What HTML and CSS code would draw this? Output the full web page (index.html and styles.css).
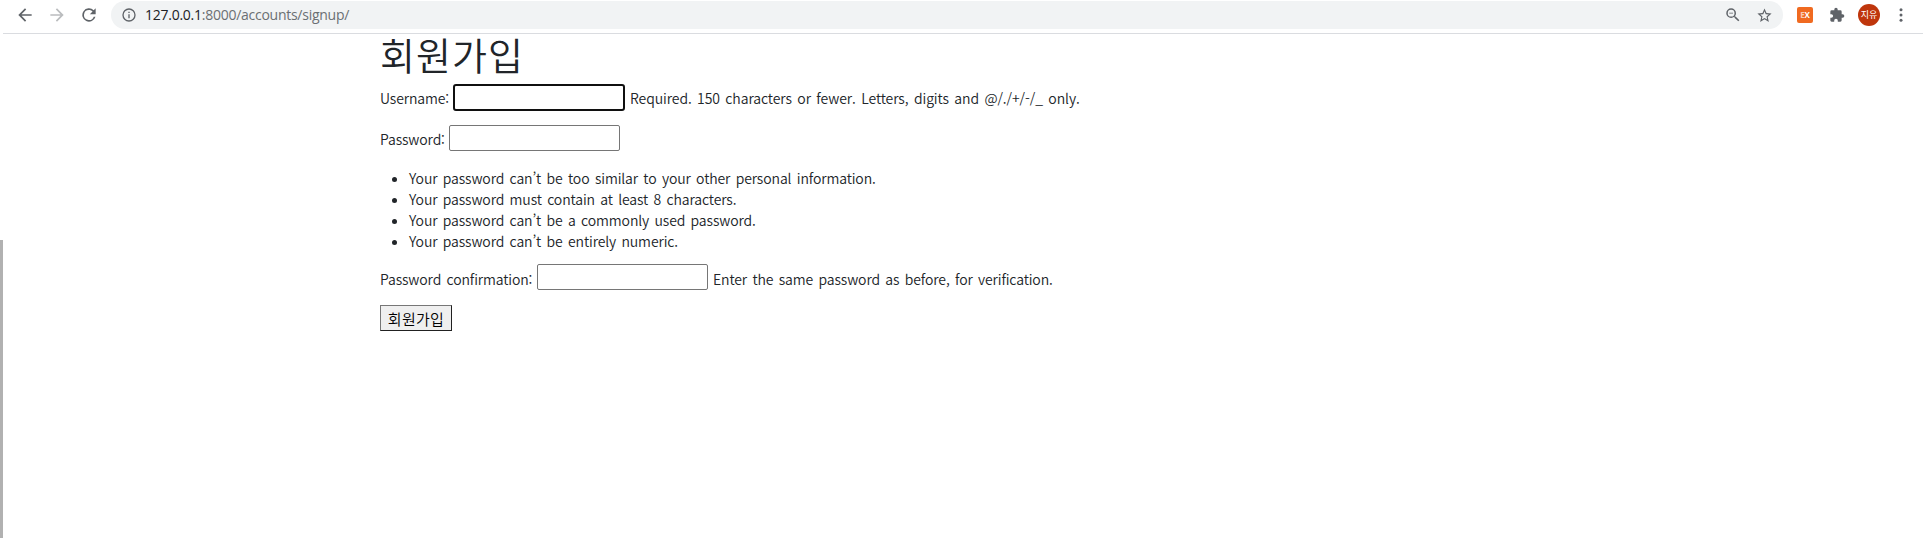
FILE: index.html
```html
<!DOCTYPE html>
<html lang="ko">
<head>
<meta charset="utf-8">
<title>회원가입</title>
<link rel="stylesheet" href="styles.css">
</head>
<body>
<header class="toolbar">
  <svg class="icon back" viewBox="0 0 24 24"><path d="M20 11H7.83l5.59-5.59L12 4l-8 8 8 8 1.41-1.41L7.83 13H20z"/></svg>
  <svg class="icon forward" viewBox="0 0 24 24"><path d="M12 4l-1.41 1.41L16.17 11H4v2h12.17l-5.58 5.59L12 20l8-8z"/></svg>
  <svg class="icon reload" viewBox="0 0 24 24"><path d="M17.65 6.35A8 8 0 1 0 19.73 14h-2.08A6 6 0 1 1 12 6c1.66 0 3.14.69 4.22 1.78L13 11h7V4z"/></svg>
  <div class="address">
    <svg class="info" viewBox="0 0 24 24"><path d="M11 7h2v2h-2zm0 4h2v6h-2zm1-9a10 10 0 1 0 0 20 10 10 0 0 0 0-20zm0 18a8 8 0 1 1 0-16 8 8 0 0 1 0 16z"/></svg>
    <span class="url"><span class="host">127.0.0.1</span>:8000/accounts/signup/</span>
    <svg class="zoom" viewBox="0 0 24 24"><path d="M15.5 14h-.79l-.28-.27A6.47 6.47 0 0 0 16 9.5 6.5 6.5 0 1 0 9.5 16c1.61 0 3.09-.59 4.23-1.57l.27.28v.79l5 4.99L20.49 19zm-6 0a4.5 4.5 0 1 1 0-9 4.5 4.5 0 0 1 0 9zM7 9h5v1H7z"/></svg>
    <svg class="star" viewBox="0 0 24 24"><path d="M22 9.24l-7.19-.62L12 2 9.19 8.63 2 9.24l5.46 4.73L5.82 21 12 17.27 18.18 21l-1.63-7.03zM12 15.4l-3.76 2.27 1-4.28-3.32-2.88 4.38-.38L12 6.1l1.71 4.04 4.38.38-3.32 2.88 1 4.28z"/></svg>
  </div>
  <span class="extension"><span class="faint">E</span>X</span>
  <svg class="puzzle" viewBox="0 0 24 24"><path d="M20.5 11H19V7a2 2 0 0 0-2-2h-4V3.500a2.500 2.500 0 0 0-5 0V5H4a2 2 0 0 0-2 2v3.800h1.500a2.700 2.700 0 0 1 0 5.400H2V20c0 1.100.9 2 2 2h3.800v-1.500a2.700 2.700 0 0 1 5.400 0V22H17a2 2 0 0 0 2-2v-4h1.500a2.500 2.500 0 0 0 0-5z"/></svg>
  <span class="avatar">지유</span>
  <svg class="menu" viewBox="0 0 24 24"><circle cx="12" cy="5" r="2"/><circle cx="12" cy="12" r="2"/><circle cx="12" cy="19" r="2"/></svg>
</header>
<div class="viewport">
  <div class="side"></div>
  <main class="container">
    <h1>회원가입</h1>
    <form>
      <div class="row first"><label class="username" for="u">Username:</label><input class="focused" id="u" type="text"><span class="help required">Required. 150 characters or fewer. Letters, digits and @/./+/-/_ only.</span></div>
      <div class="row second"><label class="password" for="p">Password:</label><input id="p" type="password"></div>
      <ul>
        <li>Your password can’t be too similar to your other personal information.</li>
        <li>Your password must contain at least 8 characters.</li>
        <li>Your password can’t be a commonly used password.</li>
        <li>Your password can’t be entirely numeric.</li>
      </ul>
      <div class="row third"><label class="confirm" for="c">Password confirmation:</label><input id="c" type="password"><span class="help verify">Enter the same password as before, for verification.</span></div>
      <button type="button">회원가입</button>
    </form>
  </main>
</div>
</body>
</html>
```
FILE: styles.css
```css
* { box-sizing: border-box; }
body {
  margin: 0;
  height: 538px;
  overflow: hidden;
  background: #fff;
  color: #212529;
  font: 350 14px/21px "Noto Sans CJK KR DemiLight", "Noto Sans CJK KR", sans-serif;
  word-spacing: 1.6px;
  letter-spacing: -.12px;
}
.toolbar {
  display: flex;
  align-items: center;
  height: 34px;
  margin-left: 3px;
  padding: 0 0 4px 12px;
  border-bottom: 1px solid #dadce0;
}
svg { display: block; flex: none; fill: #5f6368; }
.icon { width: 20px; height: 20px; margin-right: 12px; }
.forward { fill: #babcbe; }
.address {
  display: flex;
  align-items: center;
  width: 1672px;
  height: 28px;
  margin-top: 1px;
  padding: 0 10px;
  border-radius: 14px;
  background: #f1f3f4;
}
.info { width: 16px; height: 16px; }
.url {
  flex: 1;
  margin-left: 8px;
  color: #6b6f73;
  font: 400 14px/20px "Open Sans", sans-serif;
  letter-spacing: -.26px;
}
.host { color: #202124; }
.zoom { width: 18px; height: 18px; margin-right: 14px; }
.star { width: 17px; height: 17px; }
.extension {
  width: 16px;
  height: 16px;
  margin-left: 14px;
  border-radius: 2px;
  background: #f06a20;
  color: #fff;
  text-align: center;
  font: 700 8px/16px "Open Sans", sans-serif;
}
.faint { opacity: .65; }
.puzzle { width: 16px; height: 16px; margin-left: 16px; }
.avatar {
  width: 22px;
  height: 22px;
  margin-left: 13px;
  border-radius: 50%;
  background: #bf360c;
  color: #fff;
  text-align: center;
  font: 400 9px/21px "Noto Sans CJK KR", sans-serif;
}
.menu { width: 18px; height: 18px; margin-left: 12px; }
.viewport { display: flex; height: 504px; }
.side { width: 3px; height: 298px; margin-top: 206px; background: #b1b1b1; }
.container { width: 1160px; margin-left: 377px; }
h1 {
  margin: 0 0 8px;
  padding-bottom: 2px;
  font-size: 38px;
  line-height: 40px;
  font-weight: 350;
  letter-spacing: 1px;
}
.row { display: flex; height: 26px; white-space: nowrap; }
.row label, .help { padding-top: 4px; }
.first { margin-bottom: 15px; }
.second { margin-bottom: 17px; }
.third { margin-bottom: 15px; }
.third label, .third .help { padding-top: 5px; }
.required { letter-spacing: -.08px; }
.username { width: 73px; }
.password { width: 69px; }
.confirm { width: 157px; }
input {
  width: 171px;
  height: 26px;
  margin: 0 5px 0 0;
  padding: 0;
  border: 1px solid #767676;
  border-radius: 2px;
  outline: none;
  background: #fff;
}
input.focused { width: 172px; height: 27px; border: 2px solid #101010; border-radius: 3px; }
ul { margin: 0 0 12px; padding-left: 29px; }
li { height: 21px; white-space: nowrap; }
button {
  display: block;
  width: 72px;
  height: 26px;
  padding: 0;
  border: 1px solid;
  border-color: #767676 #212121 #212121 #767676;
  background: #efefef;
  color: #000;
  font: 350 15px/23px "Noto Sans CJK KR DemiLight", "Noto Sans CJK KR", sans-serif;
  letter-spacing: .3px;
}
```
